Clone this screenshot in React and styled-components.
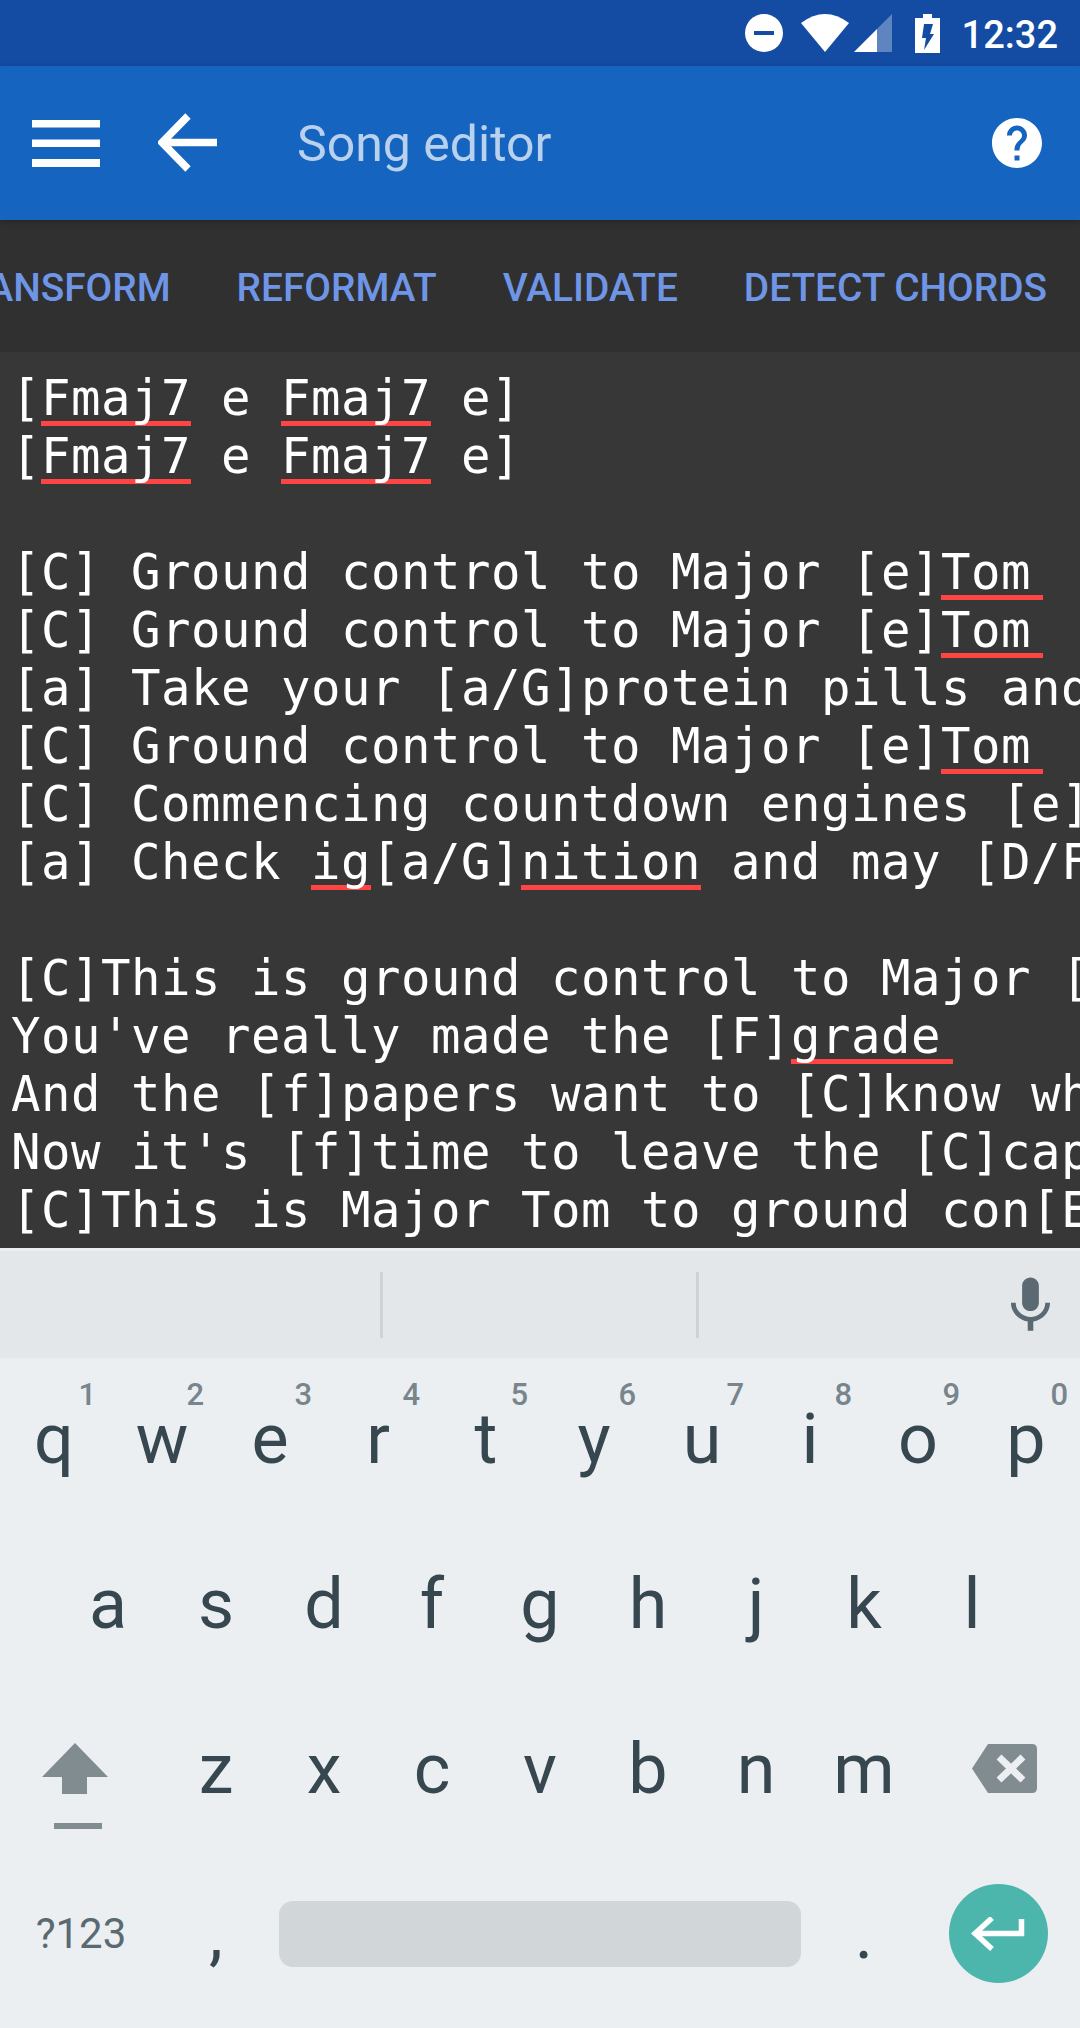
import styled, { createGlobalStyle } from "styled-components";
import { MdHelp, MdMic } from "react-icons/md";

const GlobalStyle = createGlobalStyle`
  html, body {
    margin: 0;
    padding: 0;
    background: #eceff1;
  }
  * {
    box-sizing: border-box;
  }
`;

const song = [
  "[{Fmaj7} e {Fmaj7} e]",
  "[{Fmaj7} e {Fmaj7} e]",
  "",
  "[C] Ground control to Major [e]{Tom}",
  "[C] Ground control to Major [e]{Tom}",
  "[a] Take your [a/G]protein pills and put your helmet on",
  "[C] Ground control to Major [e]{Tom}",
  "[C] Commencing countdown engines [e]on",
  "[a] Check {ig}[a/G]{nition} and may [D/F#]God's love be with you",
  "",
  "[C]This is ground control to Major [e]Tom",
  "You've really made the [F]{grade}",
  "And the [f]papers want to [C]know whose shirts you wear",
  "Now it's [f]time to leave the [C]capsule if you dare",
  "[C]This is Major Tom to ground con[E7]trol",
];

const rowOne = [
  ["q", "1"],
  ["w", "2"],
  ["e", "3"],
  ["r", "4"],
  ["t", "5"],
  ["y", "6"],
  ["u", "7"],
  ["i", "8"],
  ["o", "9"],
  ["p", "0"],
];

const actions = ["TRANSFORM", "REFORMAT", "VALIDATE", "DETECT CHORDS"];

const SongLine = ({ text }) => {
  const parts = text.split(/(\{[^}]*\})/).filter(Boolean);
  return (
    <Line>
      {parts.map((part, i) =>
        part.startsWith("{") ? (
          <Misspelled key={i} $tail={i === parts.length - 1}>
            {part.slice(1, -1)}
          </Misspelled>
        ) : (
          part
        )
      )}
    </Line>
  );
};

const StatusIcons = () => (
  <>
    <Dnd />
    <Wifi width="48" height="38" viewBox="0 0 48 38">
      <path d="M0 9Q24 -9 48 9L24 38Z" fill="#fff" />
    </Wifi>
    <Signal width="38" height="38" viewBox="0 0 38 38">
      <path d="M0 38L23 15V38Z" fill="#fff" />
      <path d="M23 15L38 0V38H23Z" fill="#fff" fillOpacity="0.32" />
    </Signal>
    <Battery width="25" height="39" viewBox="0 0 25 39">
      <path d="M8 0H17V4H25V39H0V4H8Z" fill="#fff" />
      <path d="M9 10H18L15 20H19L9 36L11 24H7Z" fill="#144ca3" />
    </Battery>
  </>
);

const App = () => {
  return (
    <Screen>
      <GlobalStyle />
      <StatusBar>
        <StatusIcons />
        <Clock>12:32</Clock>
      </StatusBar>
      <AppBar>
        <MenuIcon width="68" height="47" viewBox="0 0 68 47">
          <path d="M0 0H68V7.5H0ZM0 19.5H68V27H0ZM0 39H68V47H0Z" fill="#fff" />
        </MenuIcon>
        <BackIcon width="60" height="60" viewBox="0 0 60 60">
          <path
            d="M59 29.5H6M30 3L4 29.5L30 56"
            fill="none"
            stroke="#fff"
            strokeWidth="7.5"
          />
        </BackIcon>
        <Title>Song editor</Title>
        <HelpButton>
          <MdHelp size={60} color="#fff" />
        </HelpButton>
      </AppBar>
      <Toolbar>
        {actions.map((label) => (
          <Action key={label}>{label}</Action>
        ))}
      </Toolbar>
      <Editor>
        {song.map((text, i) => (
          <SongLine key={i} text={text} />
        ))}
      </Editor>
      <Keyboard>
        <Suggestions>
          <Suggestion $width={383} $divider />
          <Suggestion $width={316} $divider />
          <MicSlot>
            <MdMic size={67} color="#5a6972" />
          </MicSlot>
        </Suggestions>
        <KeyRow $height={160} $columns="repeat(10, 108px)">
          {rowOne.map(([letter, digit]) => (
            <Key key={letter} $lift>
              {letter}
              <Digit>{digit}</Digit>
            </Key>
          ))}
        </KeyRow>
        <KeyRow $columns="repeat(9, 108px)" $inset={54}>
          {"asdfghjkl".split("").map((letter) => (
            <Key key={letter}>{letter}</Key>
          ))}
        </KeyRow>
        <KeyRow $columns="162px repeat(7, 108px) 162px">
          <ShiftKey>
            <svg width="66" height="86" viewBox="0 0 66 86">
              <path d="M33 0L66 34H45V51H20V34H0Z" fill="#818c91" />
              <path d="M12 80H60V86H12Z" fill="#818c91" />
            </svg>
          </ShiftKey>
          {"zxcvbnm".split("").map((letter) => (
            <Key key={letter}>{letter}</Key>
          ))}
          <BackspaceKey>
            <svg width="65" height="49" viewBox="0 0 65 49">
              <path
                d="M16 0H60Q65 0 65 5V44Q65 49 60 49H16L0 24.5Z"
                fill="#818c91"
              />
              <path
                d="M27 13L51 36M51 13L27 36"
                stroke="#eceff1"
                strokeWidth="7"
              />
            </svg>
          </BackspaceKey>
        </KeyRow>
        <KeyRow $columns="162px 108px 540px 108px 162px">
          <SymbolsKey>?123</SymbolsKey>
          <Key>,</Key>
          <SpaceCell>
            <SpaceBar />
          </SpaceCell>
          <Key>.</Key>
          <SpaceCell>
            <EnterButton>
              <svg width="54" height="34" viewBox="0 0 54 34">
                <path
                  d="M50.5 2V16.5H5M21 1L4 16.5L21 32"
                  fill="none"
                  stroke="#fff"
                  strokeWidth="5.5"
                />
              </svg>
            </EnterButton>
          </SpaceCell>
        </KeyRow>
      </Keyboard>
    </Screen>
  );
};

const Screen = styled.div`
  width: 1080px;
  height: 2028px;
  overflow: hidden;
  display: flex;
  flex-direction: column;
  font-family: Roboto, "Liberation Sans", sans-serif;
`;

const StatusBar = styled.div`
  height: 66px;
  background: #144ca3;
  display: flex;
  align-items: center;
  justify-content: flex-end;
  padding-right: 22px;
  flex-shrink: 0;
`;

const Dnd = styled.div`
  width: 38px;
  height: 38px;
  border-radius: 50%;
  background: #fff;
  display: flex;
  align-items: center;
  justify-content: center;
  &::after {
    content: "";
    width: 20px;
    height: 4px;
    background: #144ca3;
  }
`;

const Wifi = styled.svg`
  margin-left: 18px;
`;

const Signal = styled.svg`
  margin-left: 5px;
`;

const Battery = styled.svg`
  margin-left: 23px;
`;

const Clock = styled.div`
  margin-left: 22px;
  padding-top: 4px;
  color: #fff;
  font-size: 38px;
  font-weight: 500;
  line-height: 44px;
`;

const AppBar = styled.header`
  height: 154px;
  background: #1565c0;
  display: flex;
  align-items: center;
  padding-left: 32px;
  flex-shrink: 0;
  position: relative;
  z-index: 1;
  box-shadow: 0 2px 6px rgba(0, 0, 0, 0.25);
`;

const MenuIcon = styled.svg`
  flex-shrink: 0;
`;

const BackIcon = styled.svg`
  margin-left: 58px;
  flex-shrink: 0;
`;

const Title = styled.h1`
  margin: 2px 0 0 79px;
  color: #b9d1ec;
  font-size: 50px;
  font-weight: 400;
`;

const HelpButton = styled.div`
  margin-left: auto;
  margin-right: 33px;
  display: flex;
`;

const Toolbar = styled.nav`
  height: 132px;
  background: #303030;
  display: flex;
  align-items: center;
  justify-content: flex-end;
  gap: 66px;
  padding: 3px 33px 0 0;
  overflow: hidden;
  flex-shrink: 0;
`;

const Action = styled.span`
  color: #6f96e6;
  font-size: 38.8px;
  font-weight: 500;
  white-space: nowrap;
  flex-shrink: 0;
`;

const Editor = styled.main`
  height: 896px;
  background: #373737;
  padding: 18px 0 0 11px;
  overflow: hidden;
  flex-shrink: 0;
  color: #fff;
  font-family: "DejaVu Sans Mono", "Liberation Mono", monospace;
  font-size: 49px;
  letter-spacing: 0.5px;
`;

const Line = styled.div`
  height: 58px;
  line-height: 58px;
  white-space: pre;
`;

const Misspelled = styled.span`
  padding-right: ${(props) => (props.$tail ? "12px" : "0")};
  background-image: linear-gradient(#ff4444, #ff4444);
  background-repeat: no-repeat;
  background-size: 100% 5px;
  background-position: 0 51px;
`;

const Keyboard = styled.section`
  flex: 1;
  background: #eceff1;
  padding-top: 3px;
`;

const Suggestions = styled.div`
  height: 107px;
  background: #e3e7ea;
  display: flex;
  align-items: center;
  margin-bottom: 3px;
`;

const Suggestion = styled.div`
  width: ${(props) => props.$width}px;
  height: 66px;
  border-right: ${(props) => (props.$divider ? "3px solid #cdd2d6" : "none")};
`;

const MicSlot = styled.div`
  flex: 1;
  display: flex;
  justify-content: flex-end;
  padding: 2px 16px 0 0;
`;

const KeyRow = styled.div`
  height: ${(props) => props.$height || 165}px;
  display: grid;
  grid-template-columns: ${(props) => props.$columns};
  padding-left: ${(props) => props.$inset || 0}px;
`;

const Key = styled.div`
  position: relative;
  display: flex;
  align-items: center;
  justify-content: center;
  color: #37474f;
  font-size: 70px;
  line-height: 1;
  padding-bottom: ${(props) => (props.$lift ? "4px" : "0")};
`;

const Digit = styled.span`
  position: absolute;
  top: 16px;
  right: 12px;
  color: #78858d;
  font-size: 31px;
  font-weight: 500;
  line-height: 36px;
`;

const ShiftKey = styled.div`
  display: flex;
  align-items: center;
  justify-content: center;
  padding: 34px 12px 0 0;
`;

const BackspaceKey = styled.div`
  display: flex;
  align-items: center;
  justify-content: center;
  padding-left: 11px;
`;

const SymbolsKey = styled.div`
  display: flex;
  align-items: center;
  justify-content: center;
  color: #5a6a72;
  font-size: 42px;
`;

const SpaceCell = styled.div`
  display: flex;
  align-items: center;
  justify-content: center;
`;

const SpaceBar = styled.div`
  width: 522px;
  height: 66px;
  background: #d1d6d9;
  border-radius: 14px;
`;

const EnterButton = styled.div`
  width: 99px;
  height: 99px;
  margin-right: 2px;
  border-radius: 50%;
  background: #4db6ac;
  display: flex;
  align-items: center;
  justify-content: center;
`;

export default App;
